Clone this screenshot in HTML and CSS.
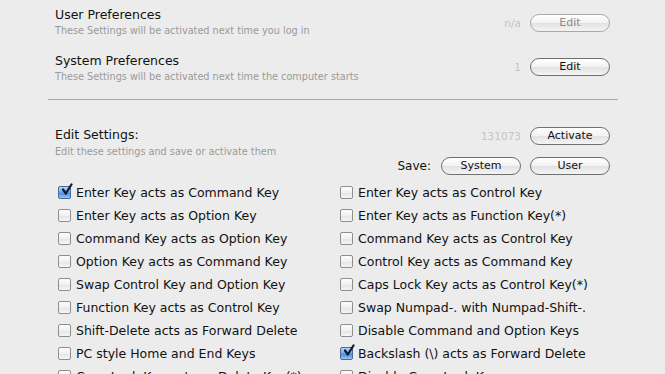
FILE: index.html
```html
<!DOCTYPE html>
<html lang="en">
<head>
  <meta charset="UTF-8">
  <title>Key Settings</title>
  <link rel="stylesheet" href="styles.css">
</head>
<body>
  <div class="panel">

    <div class="pref-row">
      <div class="pref-text">
        <div class="pref-title">User Preferences</div>
        <div class="pref-sub">These Settings will be activated next time you log in</div>
      </div>
      <div class="pref-action">
        <span class="status">n/a</span>
        <button class="pill disabled">Edit</button>
      </div>
    </div>

    <div class="pref-row second">
      <div class="pref-text">
        <div class="pref-title">System Preferences</div>
        <div class="pref-sub">These Settings will be activated next time the computer starts</div>
      </div>
      <div class="pref-action">
        <span class="status">1</span>
        <button class="pill">Edit</button>
      </div>
    </div>

    <hr class="divider">

    <div class="pref-row edit">
      <div class="pref-text">
        <div class="pref-title">Edit Settings:</div>
        <div class="pref-sub">Edit these settings and save or activate them</div>
      </div>
      <div class="pref-action">
        <span class="status">131073</span>
        <button class="pill">Activate</button>
      </div>
    </div>

    <div class="save-row">
      <span class="save-label">Save:</span>
      <button class="pill">System</button>
      <button class="pill">User</button>
    </div>

    <div class="options" id="options"></div>
  </div>

  <script>
    const options = [
      ['Enter Key acts as Command Key', true],
      ['Enter Key acts as Control Key', false],
      ['Enter Key acts as Option Key', false],
      ['Enter Key acts as Function Key(*)', false],
      ['Command Key acts as Option Key', false],
      ['Command Key acts as Control Key', false],
      ['Option Key acts as Command Key', false],
      ['Control Key acts as Command Key', false],
      ['Swap Control Key and Option Key', false],
      ['Caps Lock Key acts as Control Key(*)', false],
      ['Function Key acts as Control Key', false],
      ['Swap Numpad-. with Numpad-Shift-.', false],
      ['Shift-Delete acts as Forward Delete', false],
      ['Disable Command and Option Keys', false],
      ['PC style Home and End Keys', false],
      ['Backslash (\\) acts as Forward Delete', true],
      ['Caps Lock Key acts as Delete Key(*)', false],
      ['Disable Caps Lock Key', false]
    ];

    const tick = '<svg class="tick" viewBox="0 0 14 14" width="14" height="14">' +
      '<path d="M3 6.5 L5.8 10.5 L11.5 1.5" fill="none" stroke="#0d1a2e" stroke-width="2.2" stroke-linecap="round" stroke-linejoin="round"/></svg>';

    const list = document.getElementById('options');
    options.forEach(([label, checked]) => {
      const item = document.createElement('label');
      item.className = 'option';
      const box = document.createElement('span');
      box.className = checked ? 'box checked' : 'box';
      if (checked) box.innerHTML = tick;
      const text = document.createElement('span');
      text.textContent = label;
      item.appendChild(box);
      item.appendChild(text);
      list.appendChild(item);
    });
  </script>
</body>
</html>
```

FILE: styles.css
```css
* { box-sizing: border-box; }
body {
  margin: 0;
  background: #ececec;
  font-family: 'DejaVu Sans', 'Liberation Sans', sans-serif;
  color: #111;
  overflow: hidden;
}
.panel {
  width: 665px;
  padding: 6px 55px 0 55px;
}
.pref-row {
  display: flex;
  justify-content: space-between;
  align-items: flex-start;
}
.pref-row.second { margin-top: 15px; }
.pref-row.second .pref-action { padding-top: 6px; }
.pref-title {
  font-size: 12.5px;
  line-height: 17px;
}
.pref-sub {
  margin-top: 2px;
  font-size: 9.7px;
  line-height: 12px;
  color: #9a9a9a;
}
.pref-action {
  display: flex;
  align-items: center;
  gap: 9px;
  padding-top: 8px;
}
.status {
  font-size: 10.5px;
  color: #c4c4c4;
}
.divider {
  border: none;
  border-top: 1px solid #a8a8a8;
  margin: 16px 0 0 -7px;
  width: 570px;
}
.pref-row.edit { margin-top: 26px; }
.pref-row.edit .pref-sub { margin-top: 3px; }
.pref-row.edit .pref-action { padding-top: 1px; }
.pill {
  width: 80px;
  height: 18px;
  border-radius: 9px;
  border: 1px solid #6f6f6f;
  background: linear-gradient(#ffffff, #f2f2f2 50%, #e2e2e2 51%, #f4f4f4);
  font-family: 'DejaVu Sans', 'Liberation Sans', sans-serif;
  font-size: 11px;
  color: #111;
  padding: 0;
  line-height: 16px;
}
.pill.disabled {
  border-color: #a9a9a9;
  color: #8c8c8c;
}
.save-row {
  display: flex;
  justify-content: flex-end;
  align-items: center;
  gap: 9px;
  margin-top: -1px;
}
.save-label {
  font-size: 12px;
  margin-right: 1px;
}
.options {
  display: grid;
  grid-template-columns: 282px 1fr;
  grid-auto-rows: 23px;
  margin-top: 6px;
  padding-left: 3px;
}
.option {
  display: flex;
  align-items: center;
  gap: 5px;
  font-size: 12.5px;
  white-space: nowrap;
}
.box {
  position: relative;
  width: 13px;
  height: 13px;
  border: 1px solid #8e8e8e;
  border-radius: 2px;
  background: linear-gradient(#fdfdfd, #f0f0f0 50%, #e4e4e4 51%, #f6f6f6);
  flex: none;
}
.box.checked {
  border-color: #4a6a9a;
  background: linear-gradient(#b8d6f6, #6aa4e6 50%, #3f86da 51%, #97c5f4);
}
.tick {
  position: absolute;
  left: 1px;
  top: -4px;
}
```
